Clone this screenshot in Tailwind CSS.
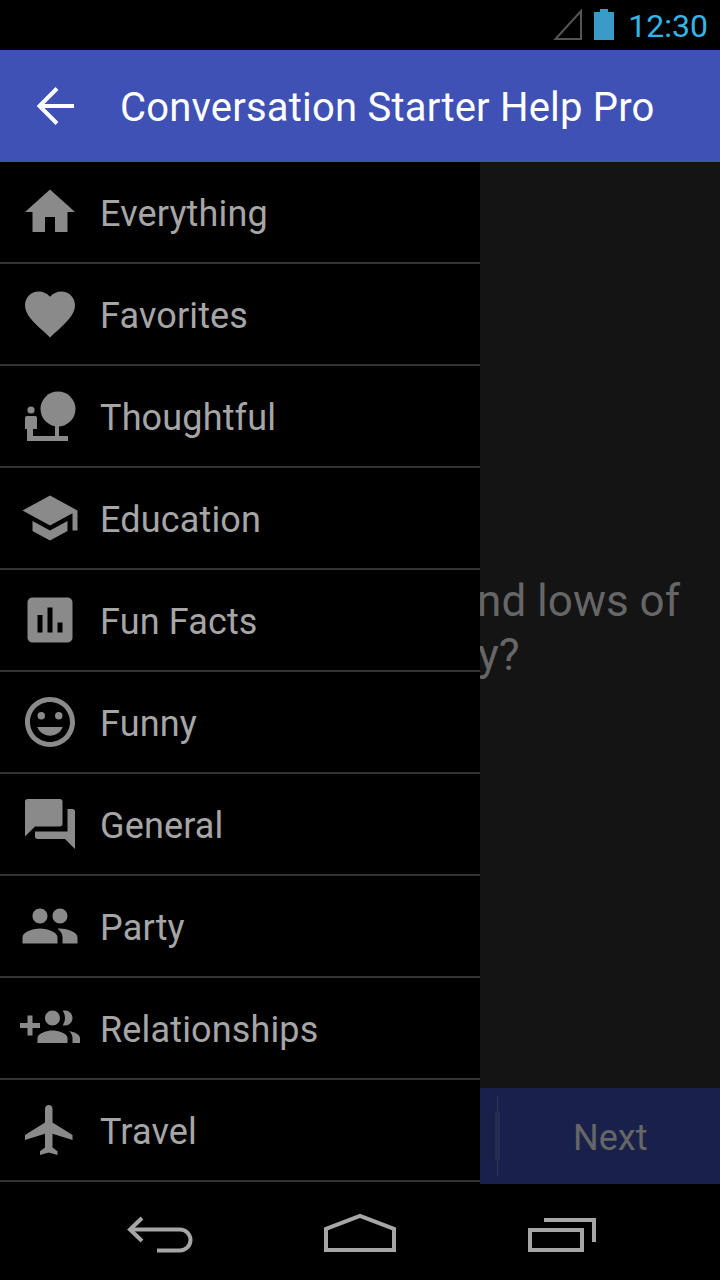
<!DOCTYPE html>
<html lang="en">
<head>
    <meta charset="UTF-8">
    <meta name="viewport" content="width=device-width, initial-scale=1.0">
    <title>Conversation Starter Help Pro</title>
    <script src="https://cdn.jsdelivr.net/npm/@tailwindcss/browser@4"></script>
</head>
<body class="bg-black font-['Roboto',sans-serif]">
    <div class="w-[720px] h-[1280px] flex flex-col overflow-hidden">

        <!-- Status bar -->
        <div class="h-[50px] flex items-center justify-end bg-black pr-[12px]">
            <svg width="30" height="34" viewBox="0 0 30 34" class="mr-[10px] mt-[2px]">
                <path d="M2.5 30 28 2V30Z" fill="none" stroke="#555" stroke-width="2"/>
            </svg>
            <svg width="22" height="34" viewBox="0 0 22 34" class="mr-[13px] mb-[4px]">
                <path d="M7 3h8v3h6v28H1V6h6z" fill="#3c9ac8"/>
            </svg>
            <span class="text-[32px] leading-[50px] mt-[1px] text-[#33b5e5]">12:30</span>
        </div>

        <!-- Action bar -->
        <div class="h-[112px] flex items-center bg-[#3f51b5] pl-[32px]">
            <svg width="48" height="48" viewBox="0 0 48 48" fill="none" stroke="#fff" stroke-width="4">
                <path d="M42 24H9"/>
                <path d="M25 6.5 7.5 24 25 41.5"/>
            </svg>
            <span class="ml-[40px] mt-[4px] text-[40px] tracking-[0.2px] text-white whitespace-nowrap">Conversation Starter Help Pro</span>
        </div>

        <div class="h-[1022px] flex">
            <!-- Drawer -->
            <ul class="w-[480px] bg-black text-[#a6a6a6] text-[36px] tracking-[0.15px]">
                <li class="h-[102px] flex items-center pl-[20px] border-b-2 border-[#333]">
                    <svg width="60" height="60" viewBox="0 0 24 24" fill="#8a8a8a"><path d="M10 20v-6h4v6h5v-8h3L12 3 2 12h3v8z"/></svg>
                    <span class="ml-[20px] mt-[4px]">Everything</span>
                </li>
                <li class="h-[102px] flex items-center pl-[20px] border-b-2 border-[#333]">
                    <svg width="60" height="60" viewBox="0 0 24 24" fill="#8a8a8a"><path d="M12 21.35l-1.45-1.32C5.4 15.36 2 12.28 2 8.5 2 5.42 4.42 3 7.5 3c1.74 0 3.41.81 4.5 2.09C13.09 3.81 14.76 3 16.5 3 19.58 3 22 5.42 22 8.5c0 3.78-3.4 6.86-8.55 11.54L12 21.35z"/></svg>
                    <span class="ml-[20px] mt-[4px]">Favorites</span>
                </li>
                <li class="h-[102px] flex items-center pl-[20px] border-b-2 border-[#333]">
                    <svg width="60" height="60" viewBox="0 0 60 60" fill="#8a8a8a">
                        <circle cx="38" cy="23" r="17.5"/>
                        <path d="M35 38h4v13h-4z"/>
                        <path d="M7 50h41v5H7z"/>
                        <circle cx="11" cy="24" r="3.6"/>
                        <path d="M7 30h8a2 2 0 0 1 2 2v11h-4v8H7v-8H5V32a2 2 0 0 1 2-2z"/>
                    </svg>
                    <span class="ml-[20px] mt-[4px]">Thoughtful</span>
                </li>
                <li class="h-[102px] flex items-center pl-[20px] border-b-2 border-[#333]">
                    <svg width="60" height="60" viewBox="0 0 24 24" fill="#8a8a8a"><path d="M5 13.18v4L12 21l7-3.82v-4L12 17l-7-3.82zM12 3L1 9l11 6 9-4.91V17h2V9L12 3z"/></svg>
                    <span class="ml-[20px] mt-[4px]">Education</span>
                </li>
                <li class="h-[102px] flex items-center pl-[20px] border-b-2 border-[#333]">
                    <svg width="60" height="60" viewBox="0 0 24 24" fill="#8a8a8a"><path d="M19 3H5c-1.1 0-2 .9-2 2v14c0 1.1.9 2 2 2h14c1.1 0 2-.9 2-2V5c0-1.1-.9-2-2-2zM9 17H7v-7h2v7zm4 0h-2V7h2v10zm4 0h-2v-4h2v4z"/></svg>
                    <span class="ml-[20px] mt-[4px]">Fun Facts</span>
                </li>
                <li class="h-[102px] flex items-center pl-[20px] border-b-2 border-[#333]">
                    <svg width="60" height="60" viewBox="0 0 24 24" fill="#8a8a8a">
                        <path d="M11.99 2C6.47 2 2 6.48 2 12s4.47 10 9.99 10C17.52 22 22 17.52 22 12S17.52 2 11.99 2zM12 20c-4.42 0-8-3.58-8-8s3.58-8 8-8 8 3.58 8 8-3.58 8-8 8z"/>
                        <circle cx="15.5" cy="9.5" r="1.5"/>
                        <circle cx="8.5" cy="9.5" r="1.5"/>
                        <path d="M12 17.5c2.33 0 4.3-1.46 5.11-3.5H6.89c.8 2.04 2.78 3.5 5.11 3.5z"/>
                    </svg>
                    <span class="ml-[20px] mt-[4px]">Funny</span>
                </li>
                <li class="h-[102px] flex items-center pl-[20px] border-b-2 border-[#333]">
                    <svg width="60" height="60" viewBox="0 0 24 24" fill="#8a8a8a"><path d="M21 6h-2v9H6v2c0 .55.45 1 1 1h11l4 4V7c0-.55-.45-1-1-1zm-4 6V3c0-.55-.45-1-1-1H3c-.55 0-1 .45-1 1v14l4-4h10c.55 0 1-.45 1-1z"/></svg>
                    <span class="ml-[20px] mt-[4px]">General</span>
                </li>
                <li class="h-[102px] flex items-center pl-[20px] border-b-2 border-[#333]">
                    <svg width="60" height="60" viewBox="0 0 24 24" fill="#8a8a8a"><path d="M16 11c1.66 0 2.99-1.34 2.99-3S17.66 5 16 5c-1.66 0-3 1.34-3 3s1.34 3 3 3zm-8 0c1.66 0 2.99-1.34 2.99-3S9.66 5 8 5C6.34 5 5 6.34 5 8s1.34 3 3 3zm0 2c-2.33 0-7 1.17-7 3.5V19h14v-2.5c0-2.33-4.67-3.5-7-3.5zm8 0c-.29 0-.62.02-.97.05 1.16.84 1.97 1.97 1.97 3.45V19h6v-2.5c0-2.33-4.67-3.5-7-3.5z"/></svg>
                    <span class="ml-[20px] mt-[4px]">Party</span>
                </li>
                <li class="h-[102px] flex items-center pl-[20px] border-b-2 border-[#333]">
                    <svg width="60" height="60" viewBox="0 0 24 24" fill="#8a8a8a"><path d="M8 10H5V7H3v3H0v2h3v3h2v-3h3v-2zm10 1c1.66 0 2.99-1.34 2.99-3S19.66 5 18 5c-.32 0-.63.05-.91.14.57.81.9 1.79.9 2.86s-.34 2.04-.9 2.86c.28.09.59.14.91.14zm-5 0c1.66 0 2.99-1.34 2.99-3S14.66 5 13 5c-1.66 0-3 1.34-3 3s1.34 3 3 3zm6.62 2.16c.83.73 1.38 1.66 1.38 2.84v2h3v-2c0-1.54-2.37-2.49-4.38-2.84zM13 13c-2 0-6 1-6 3v2h12v-2c0-2-4-3-6-3z"/></svg>
                    <span class="ml-[20px] mt-[4px]">Relationships</span>
                </li>
                <li class="h-[102px] flex items-center pl-[20px] border-b-2 border-[#333]">
                    <svg width="60" height="60" viewBox="0 0 24 24" fill="#8a8a8a"><path d="M21 16v-2l-8-5V3.5c0-.83-.67-1.5-1.5-1.5S10 2.67 10 3.5V9l-8 5v2l8-2.5V19l-2 1.5V22l3.5-1 3.5 1v-1.5L13 19v-5.5l8 2.5z"/></svg>
                    <span class="ml-[20px] mt-[4px]">Travel</span>
                </li>
            </ul>

            <!-- Content dimmed behind the drawer -->
            <div class="w-[240px] flex flex-col">
                <div class="h-[926px] bg-[#141414] overflow-hidden pt-[412px] text-[44px] leading-[54px] text-[#666]">
                    <div class="flex justify-end pr-[40px] whitespace-nowrap">nd lows of</div>
                    <div class="ml-[-2px] whitespace-nowrap">y?</div>
                </div>
                <div class="h-[96px] flex items-center bg-[#19214a]">
                    <div class="ml-[15px] w-[5px] h-[80px] flex justify-center items-center relative">
                        <div class="w-[1px] h-[80px] bg-[#2f3658]"></div>
                        <div class="absolute w-[5px] h-[48px] bg-[#262d52]"></div>
                    </div>
                    <span class="ml-[73px] mt-[4px] text-[36px] text-[#666]">Next</span>
                </div>
            </div>
        </div>

        <!-- Navigation bar -->
        <div class="h-[96px] grid grid-cols-3 px-[60px] bg-black">
            <div class="flex items-center justify-center">
                <svg width="80" height="48" viewBox="0 0 80 48" fill="none" stroke="#a6a6a6" stroke-width="4">
                    <path d="M22 10 10 21.5 22 33"/>
                    <path d="M10 21.5H60a10.5 10.5 0 0 1 0 21H37"/>
                </svg>
            </div>
            <div class="flex items-center justify-center">
                <svg width="80" height="48" viewBox="0 0 80 48" fill="none" stroke="#a6a6a6" stroke-width="4">
                    <path d="M6 42V21L40 8 74 21V42Z"/>
                </svg>
            </div>
            <div class="flex items-center justify-center">
                <svg width="80" height="48" viewBox="0 0 80 48" fill="none" stroke="#a6a6a6" stroke-width="4">
                    <path d="M10 22h52v20H10z"/>
                    <path d="M24 12H74V34"/>
                </svg>
            </div>
        </div>
    </div>
</body>
</html>
